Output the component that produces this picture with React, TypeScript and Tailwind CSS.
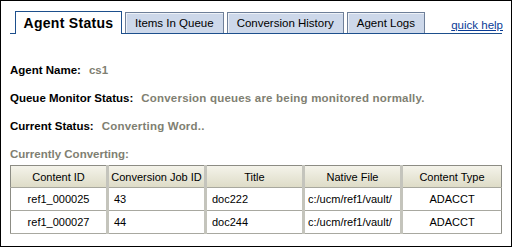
const rows = [
  { id: 'ref1_000025', job: '43', title: 'doc222', file: 'c:/ucm/ref1/vault/', type: 'ADACCT' },
  { id: 'ref1_000027', job: '44', title: 'doc244', file: 'c:/ucm/ref1/vault/', type: 'ADACCT' },
];

const tabs = ['Items In Queue', 'Conversion History', 'Agent Logs'];

export default function App() {
  return (
    <div
      className="w-[512px] h-[247px] border border-black bg-white overflow-hidden text-[11px] leading-[14px] text-black"
      style={{ fontFamily: '"Liberation Sans", Arial, sans-serif' }}
    >
      {/* tab strip */}
      <div className="mx-[9px] mt-[11px] flex items-end border-b border-[#1d4f8c] pl-[5px] h-[22px]">
        <div className="h-[23px] -mb-px w-[107px] border border-b-0 border-[#1d4f8c] bg-white flex items-center justify-center text-[14px] font-bold tracking-[0.3px]">
          Agent Status
        </div>
        <div className="flex">
          {tabs.map((t) => (
            <div
              key={t}
              className="ml-[3px] h-[21px] px-[9px] border border-b-0 border-[#6e7f99] bg-[#cdd8ea] flex items-center text-[11.5px] shadow-[inset_1px_1px_0_#eef2f8]"
            >
              {t}
            </div>
          ))}
        </div>
        <a className="ml-auto mr-[-1px] mb-[1px] text-[11.5px] text-[#0a3c96] underline">quick help</a>
      </div>

      <div className="px-[9px] text-[11.5px]">
        <div className="mt-[29px] flex gap-[8px]">
          <span className="font-bold">Agent Name:</span>
          <span className="font-bold text-[#7f7f72]">cs1</span>
        </div>
        <div className="mt-[14px] flex gap-[8px]">
          <span className="font-bold">Queue Monitor Status:</span>
          <span className="font-bold text-[#7f7f72] tracking-[0.2px]">Conversion queues are being monitored normally.</span>
        </div>
        <div className="mt-[14px] flex gap-[8px]">
          <span className="font-bold">Current Status:</span>
          <span className="font-bold text-[#7f7f72] tracking-[0.2px]">Converting Word..</span>
        </div>
        <div className="mt-[14px] font-bold text-[#7f7f72]">Currently Converting:</div>

        <table className="mt-[4px] w-[492px] border-collapse table-fixed border border-[#8c8c84] text-[11px]">
          <colgroup>
            <col className="w-[97px]" />
            <col className="w-[98px]" />
            <col className="w-[98px]" />
            <col className="w-[98px]" />
            <col />
          </colgroup>
          <thead>
            <tr className="h-[22px] bg-gradient-to-b from-[#f4f3ea] to-[#dddbc6]">
              {['Content ID', 'Conversion Job ID', 'Title', 'Native File', 'Content Type'].map((h) => (
                <th
                  key={h}
                  className="font-normal text-center whitespace-nowrap border-x-[3px] border-[#c4c4bc] border-b border-b-[#a8a89e] px-0 first:border-l-0 last:border-r-0"
                >
                  {h}
                </th>
              ))}
            </tr>
          </thead>
          <tbody>
            {rows.map((r) => (
              <tr key={r.id} className="h-[23px] border-b border-[#a8a8a0]">
                <td className="text-center border-r-[3px] border-[#c4c4bc]">{r.id}</td>
                <td className="pl-[5px] border-r-[3px] border-[#c4c4bc]">{r.job}</td>
                <td className="pl-[5px] border-r-[3px] border-[#c4c4bc]">{r.title}</td>
                <td className="pl-[3px] border-r-[3px] border-[#c4c4bc] whitespace-nowrap overflow-hidden">{r.file}</td>
                <td className="text-center">{r.type}</td>
              </tr>
            ))}
          </tbody>
        </table>
      </div>
    </div>
  );
}
